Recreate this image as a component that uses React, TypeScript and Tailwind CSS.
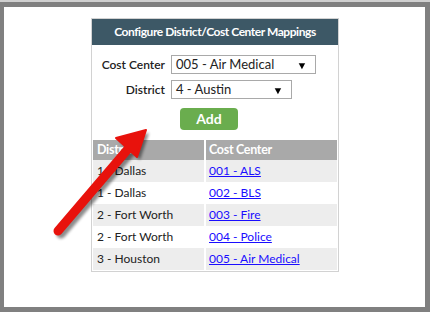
import React from "react";

const rows = [
  ["1 - Dallas", "001 - ALS"],
  ["1 - Dallas", "002 - BLS"],
  ["2 - Fort Worth", "003 - Fire"],
  ["2 - Fort Worth", "004 - Police"],
  ["3 - Houston", "005 - Air Medical"],
];

function Select({ value, width }: { value: string; width: string }) {
  return (
    <div
      className={`${width} h-[19px] border border-[#a9a9a9] bg-white flex items-center justify-between pl-[4px] pr-[8px] text-[13px] text-[#222]`}
    >
      <span className="leading-none">{value}</span>
      <span className="text-[10px] leading-none text-black scale-x-110">▼</span>
    </div>
  );
}

export default function App() {
  return (
    <div
      className="w-[430px] h-[312px] bg-[#808080] flex flex-col"
      style={{ fontFamily: "Lato, 'Liberation Sans', sans-serif" }}
    >
      <div className="h-[2px] bg-[#d0d0d0] shrink-0" />
      <div className="flex-1 pt-[5px] pl-[4px] pr-[5px] pb-[5px] flex">
        <div className="relative flex-1 bg-white pl-[87px] pt-[11px]">
          <div className="w-[248px] border border-[#d2d2d2] bg-white">
            <div className="h-[26px] bg-[#3d5866] flex items-center justify-center text-white font-bold text-[12px] tracking-[-0.45px]">
              Configure District/Cost Center Mappings
            </div>
            <div className="pt-[10px] flex flex-col gap-[6px]">
              <div className="flex items-center h-[19px]">
                <div className="w-[73px] text-right text-[12px] leading-none text-[#222] font-semibold">Cost Center</div>
                <div className="ml-[6px]">
                  <Select value="005 - Air Medical" width="w-[145px]" />
                </div>
              </div>
              <div className="flex items-center h-[19px]">
                <div className="w-[73px] text-right text-[12px] leading-none text-[#222] font-semibold">District</div>
                <div className="ml-[6px]">
                  <Select value="4 - Austin" width="w-[121px]" />
                </div>
              </div>
            </div>
            <div className="flex justify-center pt-[9px] pr-[12px]">
              <div className="w-[58px] h-[22px] rounded-[4px] bg-[#6aad4e] text-white font-bold text-[14px] leading-none flex items-center justify-center">
                Add
              </div>
            </div>
            <div className="mt-[10px] px-[1px] pb-[1px] grid grid-cols-[111px_1fr] gap-x-[2px] text-[12px] leading-none">
              <div className="h-[20px] bg-[#a9a9a9] text-white font-bold flex items-center pl-[4px] text-[12.5px] tracking-[-0.3px]">District</div>
              <div className="h-[20px] bg-[#a9a9a9] text-white font-bold flex items-center pl-[3px] text-[12.5px] tracking-[-0.3px]">Cost Center</div>
              {rows.map(([d, c], i) => (
                <React.Fragment key={i}>
                  <div className={`h-[22px] flex items-center pl-[4px] text-[#222] ${i % 2 === 0 ? "bg-[#ededed]" : "bg-white"}`}>{d}</div>
                  <div className={`h-[22px] flex items-center pl-[3px] ${i % 2 === 0 ? "bg-[#ededed]" : "bg-white"}`}>
                    <span className="text-[#1a0dff] underline">{c}</span>
                  </div>
                </React.Fragment>
              ))}
            </div>
          </div>
          <svg className="absolute left-0 top-0" width="421" height="300" viewBox="0 0 421 300">
            <defs>
              <filter id="sh" x="-20%" y="-20%" width="140%" height="140%">
                <feGaussianBlur stdDeviation="1.5" />
              </filter>
            </defs>
            <g transform="translate(-4,-7)">
              <g transform="translate(3,3)" opacity="0.45" filter="url(#sh)">
                <line x1="58" y1="231" x2="128" y2="149" stroke="#000" strokeWidth="9" strokeLinecap="round" />
                <polygon points="146,130 116,138 137,157" fill="#000" />
              </g>
              <line x1="58" y1="231" x2="128" y2="149" stroke="#e8120c" strokeWidth="9" strokeLinecap="round" />
              <polygon points="146,130 116,138 137,157" fill="#e8120c" stroke="#e8120c" strokeWidth="2" strokeLinejoin="round" />
            </g>
          </svg>
        </div>
      </div>
    </div>
  );
}
